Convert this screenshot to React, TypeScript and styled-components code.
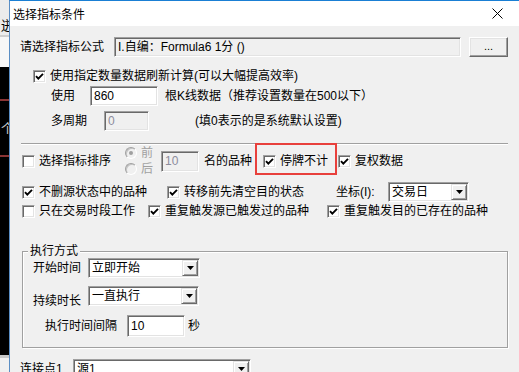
import React from "react";
import styled, { createGlobalStyle } from "styled-components";

const GlobalStyle = createGlobalStyle`
  html, body { margin: 0; padding: 0; background: #f0f0f0; }
  body {
    font-family: "Liberation Sans", "Noto Sans CJK SC", sans-serif;
    font-size: 12px;
    color: #000;
  }
  * { box-sizing: border-box; }
`;

const Screen = styled.div`
  width: 519px;
  height: 372px;
  display: flex;
  overflow: hidden;
`;

/* ---------- background application strip ---------- */
const BackStrip = styled.div`
  width: 9px;
  flex: none;
  display: flex;
  flex-direction: column;
  overflow: hidden;
`;

const BackBand = styled.div<{ $h: number; $bg: string; $color?: string; $pt?: number }>`
  height: ${(p) => p.$h}px;
  flex: none;
  background: ${(p) => p.$bg};
  color: ${(p) => p.$color ?? "#000"};
  font-family: "Noto Sans CJK SC", sans-serif;
  font-size: 13px;
  line-height: ${(p) => (p.$pt ? 16 : p.$h)}px;
  padding-top: ${(p) => p.$pt ?? 0}px;
  padding-left: 1px;
  white-space: nowrap;
  overflow: hidden;
`;

/* ---------- dialog ---------- */
const Dialog = styled.div`
  flex: 1;
  min-width: 0;
  display: flex;
  flex-direction: column;
  border-top: 1px solid #1a7fd4;
  border-left: 1px solid #5b8ec4;
  background: #f0f0f0;
`;

const TitleBar = styled.div`
  height: 25px;
  flex: none;
  background: #fff;
  display: flex;
  align-items: center;
  justify-content: space-between;
  padding-left: 3px;
  font-family: "Noto Sans CJK SC", sans-serif;
  font-size: 12px;
  line-height: 14px;
`;

const CloseBtn = styled.div`
  width: 44px;
  height: 25px;
  display: flex;
  align-items: center;
  justify-content: center;
`;

const Body = styled.div`
  flex: 1;
  display: flex;
  flex-direction: column;
  padding: 11px 11px 0 10px;
`;

const Row = styled.div<{ $mt?: number; $h?: number; $pl?: number }>`
  display: flex;
  align-items: center;
  flex: none;
  position: relative;
  margin-top: ${(p) => p.$mt ?? 0}px;
  height: ${(p) => p.$h ?? 20}px;
  padding-left: ${(p) => p.$pl ?? 0}px;
  line-height: 14px;
  white-space: nowrap;
`;

const Label = styled.span<{ $w?: number; $ml?: number; $pt?: number; $muted?: boolean }>`
  flex: none;
  ${(p) => (p.$w ? `width: ${p.$w}px;` : "")}
  margin-left: ${(p) => p.$ml ?? 0}px;
  padding-top: ${(p) => p.$pt ?? 0}px;
  color: ${(p) => (p.$muted ? "#a0a0a0" : "#000")};
  line-height: 14px;
`;

const CheckItem = styled.div<{ $w?: number }>`
  display: flex;
  align-items: center;
  gap: 4px;
  flex: none;
  ${(p) => (p.$w ? `width: ${p.$w}px;` : "")}
`;

const Box = styled.span`
  width: 13px;
  height: 13px;
  flex: none;
  background: #fff;
  border: 1px solid;
  border-color: #a0a0a0 #fff #fff #a0a0a0;
  box-shadow: inset 1px 1px 0 #696969, inset -1px -1px 0 #e3e3e3;
  display: flex;
  align-items: center;
  justify-content: center;
`;

const RadioGroup = styled.div<{ $w: number }>`
  width: ${(p) => p.$w}px;
  flex: none;
  display: flex;
  flex-direction: column;
`;

const RadioRow = styled.div`
  height: 16px;
  display: flex;
  align-items: center;
  gap: 4px;
`;

const RadioDot = styled.span<{ $on?: boolean }>`
  width: 12px;
  height: 12px;
  flex: none;
  border-radius: 50%;
  border: 1px solid;
  border-color: #a0a0a0 #fff #fff #a0a0a0;
  box-shadow: inset 1px 1px 0 #c4c4c4;
  background: #f0f0f0;
  display: flex;
  align-items: center;
  justify-content: center;
  &::after {
    content: "";
    width: 4px;
    height: 4px;
    border-radius: 50%;
    background: ${(p) => (p.$on ? "#a0a0a0" : "transparent")};
  }
`;

const Field = styled.div<{ $w: number; $h?: number; $disabled?: boolean; $gray?: boolean }>`
  width: ${(p) => p.$w}px;
  height: ${(p) => p.$h ?? 20}px;
  flex: none;
  background: ${(p) => (p.$disabled || p.$gray ? "#f0f0f0" : "#fff")};
  color: ${(p) => (p.$disabled ? "#8c8c9c" : "#000")};
  border: 1px solid;
  border-color: #a0a0a0 #fff #fff #a0a0a0;
  box-shadow: inset 1px 1px 0 #696969, inset -1px -1px 0 #e3e3e3;
  padding-left: 3px;
  display: flex;
  align-items: center;
  overflow: hidden;
  white-space: nowrap;
`;

const Select = styled.div<{ $w: number }>`
  width: ${(p) => p.$w}px;
  height: 20px;
  flex: none;
  background: #fff;
  border: 1px solid;
  border-color: #a0a0a0 #fff #fff #a0a0a0;
  box-shadow: inset 1px 1px 0 #696969, inset -1px -1px 0 #e3e3e3;
  padding: 1px 1px 1px 3px;
  display: flex;
  align-items: center;
  justify-content: space-between;
`;

const DropBtn = styled.span`
  width: 16px;
  height: 16px;
  flex: none;
  background: #f0f0f0;
  border: 1px solid;
  border-color: #e3e3e3 #696969 #696969 #e3e3e3;
  box-shadow: inset 1px 1px 0 #fff, inset -1px -1px 0 #a0a0a0;
  display: flex;
  align-items: center;
  justify-content: center;
`;

const DotsButton = styled.div`
  width: 39px;
  height: 20px;
  flex: none;
  margin-left: 8px;
  background: #f0f0f0;
  border: 1px solid;
  border-color: #fff #696969 #696969 #fff;
  box-shadow: inset -1px -1px 0 #a0a0a0, inset 1px 1px 0 #e3e3e3;
  display: flex;
  align-items: center;
  justify-content: center;
  font-size: 11px;
  padding-bottom: 2px;
`;

const Separator = styled.div`
  height: 2px;
  flex: none;
  margin: 12px 0 0 1px;
  border-top: 1px solid #a0a0a0;
  border-bottom: 1px solid #fff;
`;

const Highlight = styled.div`
  position: absolute;
  left: 235px;
  top: -5px;
  width: 82px;
  height: 32px;
  border: 2px solid #e8403c;
  pointer-events: none;
`;

const Group = styled.fieldset`
  margin: 26px 0 0 2px;
  padding: 0 0 10px 0;
  border: 1px solid #a0a0a0;
  box-shadow: inset 1px 1px 0 #fff, 1px 1px 0 #fff;
  flex: none;
  min-inline-size: 0;
`;

const Legend = styled.legend`
  margin-left: 5px;
  padding: 0 2px;
  line-height: 14px;
  font-size: 12px;
  background: #f0f0f0;
`;

/* ---------- small parts ---------- */
const CheckMark = () => (
  <svg width="9" height="9" viewBox="0 0 9 9">
    <polyline points="1,4.2 3.3,6.6 8,1.8" fill="none" stroke="#000" strokeWidth="1.9" />
  </svg>
);

const Check: React.FC<{ label: string; w?: number; checked?: boolean }> = ({ label, w, checked }) => (
  <CheckItem $w={w}>
    <Box>{checked && <CheckMark />}</Box>
    <Label>{label}</Label>
  </CheckItem>
);

const Arrow = () => (
  <svg width="7" height="4" viewBox="0 0 7 4">
    <polygon points="0,0 7,0 3.5,4" fill="#000" />
  </svg>
);

const Combo: React.FC<{ w: number; value: string }> = ({ w, value }) => (
  <Select $w={w}>
    <span>{value}</span>
    <DropBtn>
      <Arrow />
    </DropBtn>
  </Select>
);

export default function App() {
  return (
    <>
      <GlobalStyle />
      <Screen>
        <BackStrip>
          <BackBand $h={35} $bg="#ececec" $pt={17}>迸</BackBand>
          <BackBand $h={2} $bg="#cfcfcf" />
          <BackBand $h={30} $bg="#f7f7f7" />
          <BackBand $h={32} $bg="#000" />
          <BackBand $h={2} $bg="#8a3434" />
          <BackBand $h={54} $bg="#000" $color="#c8c8c8">个</BackBand>
          <BackBand $h={2} $bg="#8a3434" />
          <BackBand $h={198} $bg="#000" />
          <BackBand $h={3} $bg="#c8c8c8" />
          <BackBand $h={14} $bg="#f0f0f0" />
        </BackStrip>

        <Dialog>
          <TitleBar>
            <span>选择指标条件</span>
            <CloseBtn>
              <svg width="11" height="11" viewBox="0 0 11 11">
                <path d="M0.5 0.5 L10.5 10.5 M10.5 0.5 L0.5 10.5" stroke="#000" strokeWidth="1" />
              </svg>
            </CloseBtn>
          </TitleBar>

          <Body>
            <Row>
              <Label $w={94}>请选择指标公式</Label>
              <Field $w={347} $gray>I.自编：Formula6 1分 ()</Field>
              <DotsButton>...</DotsButton>
            </Row>

            <Row $mt={12} $h={14} $pl={13}>
              <Check checked label="使用指定数量数据刷新计算(可以大幅提高效率)" />
            </Row>

            <Row $mt={3} $pl={31}>
              <Label $w={39}>使用</Label>
              <Field $w={68}>860</Field>
              <Label $ml={7}>根K线数据（推荐设置数量在500以下）</Label>
            </Row>

            <Row $mt={5} $pl={31}>
              <Label $w={53}>多周期</Label>
              <Field $w={45} $disabled>0</Field>
              <Label $ml={46}>(填0表示的是系统默认设置)</Label>
            </Row>

            <Separator />

            <Row $mt={3} $h={26} $pl={2}>
              <Check w={103} label="选择指标排序" />
              <RadioGroup $w={36}>
                <RadioRow>
                  <RadioDot $on />
                  <Label $muted>前</Label>
                </RadioRow>
                <RadioRow>
                  <RadioDot />
                  <Label $muted>后</Label>
                </RadioRow>
              </RadioGroup>
              <Field $w={38} $h={21} $disabled>10</Field>
              <Label $ml={5} $w={59}>名的品种</Label>
              <Check w={75} checked label="停牌不计" />
              <Check checked label="复权数据" />
              <Highlight />
            </Row>

            <Row $mt={8} $pl={2}>
              <Check w={145} checked label="不删源状态中的品种" />
              <Check w={169} checked label="转移前先清空目的状态" />
              <Label $w={52}>坐标(I):</Label>
              <Combo w={81} value="交易日" />
            </Row>

            <Row $mt={2} $h={14} $pl={2}>
              <Check w={126} label="只在交易时段工作" />
              <Check w={179} checked label="重复触发源已触发过的品种" />
              <Check checked label="重复触发目的已存在的品种" />
            </Row>

            <Group>
              <Legend>执行方式</Legend>
              <Row $pl={10}>
                <Label $w={55}>开始时间</Label>
                <Combo w={112} value="立即开始" />
              </Row>
              <Row $mt={8} $pl={10}>
                <Label $w={55} $pt={10}>持续时长</Label>
                <Combo w={111} value="一直执行" />
              </Row>
              <Row $mt={9} $h={22} $pl={22}>
                <Label $w={82}>执行时间间隔</Label>
                <Field $w={58} $h={22}>10</Field>
                <Label $ml={3}>秒</Label>
              </Row>
            </Group>

            <Row $mt={11}>
              <Label $w={53}>连接点1</Label>
              <Combo w={178} value="源1" />
            </Row>
          </Body>
        </Dialog>
      </Screen>
    </>
  );
}
